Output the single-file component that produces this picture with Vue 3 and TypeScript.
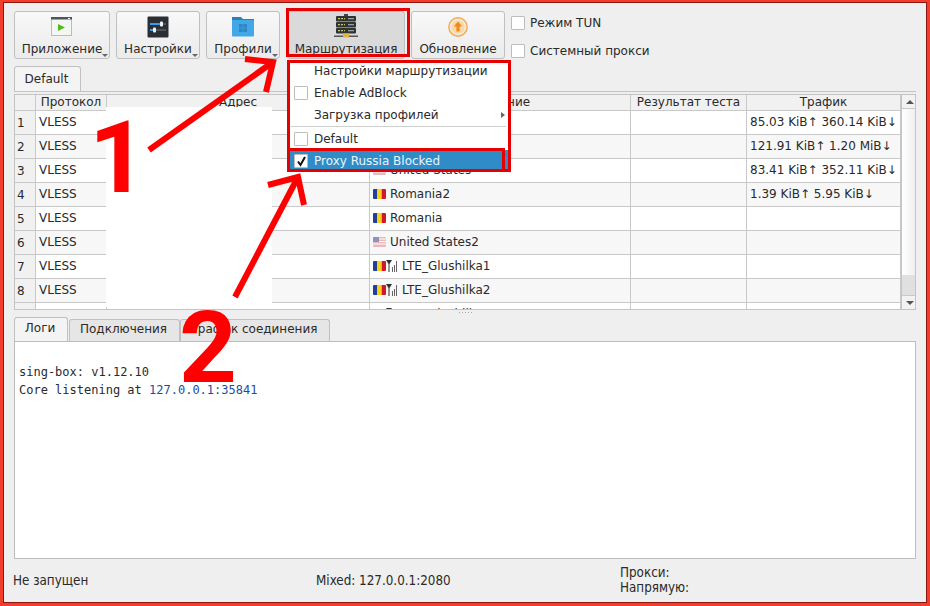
<script setup lang="ts">
interface Row {
  n: number
  flag: '' | 'ro' | 'us'
  signal: boolean
  name: string
  traffic: string
}
const rows: Row[] = [
  { n: 1, flag: '', signal: false, name: '', traffic: '85.03 KiB↑ 360.14 KiB↓' },
  { n: 2, flag: '', signal: false, name: '', traffic: '121.91 KiB↑ 1.20 MiB↓' },
  { n: 3, flag: 'us', signal: false, name: 'United States', traffic: '83.41 KiB↑ 352.11 KiB↓' },
  { n: 4, flag: 'ro', signal: false, name: 'Romania2', traffic: '1.39 KiB↑ 5.95 KiB↓' },
  { n: 5, flag: 'ro', signal: false, name: 'Romania', traffic: '' },
  { n: 6, flag: 'us', signal: false, name: 'United States2', traffic: '' },
  { n: 7, flag: 'ro', signal: true, name: 'LTE_Glushilka1', traffic: '' },
  { n: 8, flag: 'ro', signal: true, name: 'LTE_Glushilka2', traffic: '' },
  { n: 9, flag: 'ro', signal: true, name: 'LTE_Glushilka3', traffic: '' },
]
</script>

<template>
  <div class="window">
    <div class="toolbar">
      <button class="tool w1">
        <svg width="22" height="22" viewBox="0 0 22 22">
          <rect x="0.5" y="1.500" width="20" height="18" fill="#f4f6f2" stroke="#b9bdb9" />
          <rect x="0" y="1" width="21" height="2.500" fill="#4d5560" />
          <rect x="17" y="2" width="2" height="1" fill="#fff" />
          <path d="M7 8l7 3.500-7 3.500z" fill="#54b91f" />
        </svg>
        <span class="label">Приложение</span><i class="drop"></i>
      </button>
      <button class="tool w2">
        <svg width="22" height="22" viewBox="0 0 22 22">
          <rect x="0.5" y="0.500" width="21" height="21" rx="1" fill="#2b2f33" />
          <rect x="3" y="7" width="16" height="2" fill="#4c5257" />
          <rect x="3" y="7" width="11" height="2" fill="#3d9be8" />
          <rect x="13" y="5.500" width="3" height="5" rx="1" fill="#eef1f3" />
          <rect x="3" y="13" width="16" height="2" fill="#4c5257" />
          <rect x="3" y="13" width="4" height="2" fill="#3d9be8" />
          <rect x="6" y="11.500" width="3" height="5" rx="1" fill="#eef1f3" />
        </svg>
        <span class="label">Настройки</span><i class="drop"></i>
      </button>
      <button class="tool w3">
        <svg width="22" height="22" viewBox="0 0 22 22">
          <path d="M0 1h9l2 2h11v3H0z" fill="#2a81bb" />
          <rect x="0" y="4" width="22" height="16.500" rx="1" fill="#41a7e6" />
          <rect x="7" y="8" width="8" height="8" fill="#2f86c3" />
          <path d="M11 8v8M7 12h8" stroke="#41a7e6" stroke-width="0.7" />
        </svg>
        <span class="label">Профили</span><i class="drop"></i>
      </button>
      <button class="tool w4 active">
        <svg width="24" height="24" viewBox="0 0 24 24">
          <rect x="10" y="0" width="4" height="3" fill="#444" />
          <rect x="2" y="2" width="20" height="5.500" rx="1" fill="#2f3333" />
          <rect x="2" y="8" width="20" height="5.500" rx="1" fill="#2f3333" />
          <rect x="2" y="14" width="20" height="5.500" rx="1" fill="#2f3333" />
          <path d="M4 4.700h7M4 10.700h7M4 16.700h7" stroke="#c2c96a" stroke-width="1.300" stroke-dasharray="2 1" />
          <path d="M14 4.700h6M14 10.700h6M14 16.700h6" stroke="#9aa0a0" stroke-width="1.300" />
          <rect x="0" y="21.500" width="24" height="1.500" fill="#555" />
          <rect x="9" y="19.500" width="6" height="4" fill="#e3b53c" />
        </svg>
        <span class="label">Маршрутизация</span><i class="drop"></i>
      </button>
      <button class="tool w5">
        <svg width="20" height="20" viewBox="0 0 20 20">
          <circle cx="10" cy="10" r="9.200" fill="#f3e8d8" stroke="#f0aa55" stroke-width="1.400" />
          <circle cx="10" cy="10" r="6.600" fill="#f9d9a8" />
          <path d="M10 4.500l4.200 5h-2.600v5H8.400v-5H5.800z" fill="#f08a1d" />
        </svg>
        <span class="label">Обновление</span>
      </button>
      <div class="toggles">
        <label class="check-row"><span class="box"></span>Режим TUN</label>
        <label class="check-row"><span class="box"></span>Системный прокси</label>
      </div>
    </div>

    <div class="tabs top-tabs">
      <div class="tab current">Default</div>
    </div>
    <div class="pane-line"></div>

    <div class="table">
      <div class="table-main">
        <div class="row head">
          <div class="cell"></div>
          <div class="cell">Протокол</div>
          <div class="cell">Адрес</div>
          <div class="cell">Название</div>
          <div class="cell">Результат теста</div>
          <div class="cell">Трафик</div>
        </div>
        <div v-for="r in rows" :key="r.n" class="row" :class="{ alt: r.n % 2 === 0 }">
          <div class="cell num">{{ r.n }}</div>
          <div class="cell">VLESS</div>
          <div class="cell"></div>
          <div class="cell name">
            <svg v-if="r.flag === 'ro'" class="flag" width="13" height="10" viewBox="0 0 13 10">
              <rect width="4.300" height="10" fill="#1f3f9c" />
              <rect x="4.300" width="4.400" height="10" fill="#fbd116" />
              <rect x="8.700" width="4.300" height="10" fill="#d3182c" />
            </svg>
            <svg v-if="r.flag === 'us'" class="flag" width="13" height="10" viewBox="0 0 13 10">
              <rect width="13" height="10" fill="#e9b9bd" />
              <path d="M0 2h13M0 4.500h13M0 7h13" stroke="#fff" stroke-width="1.200" />
              <rect width="6" height="5" fill="#8c93bf" />
            </svg>
            <svg v-if="r.signal" class="signal" width="12" height="14" viewBox="0 0 12 14">
              <path d="M0 1h6L3.500 5v8h-1V5z" fill="#333" />
              <path d="M6.500 8v5M8.500 6v7M10.500 2v11" stroke="#666" stroke-width="1" />
            </svg>
            <span>{{ r.name }}</span>
          </div>
          <div class="cell"></div>
          <div class="cell">{{ r.traffic }}</div>
        </div>
      </div>
      <div class="scrollbar">
        <div class="sb-btn"><i class="up"></i></div>
        <div class="sb-track"><div class="sb-thumb"></div></div>
        <div class="sb-btn"><i class="down"></i></div>
      </div>
    </div>

    <div class="splitter"><i></i><i></i><i></i><i></i><i></i></div>

    <div class="tabs bottom-tabs">
      <div class="tab current">Логи</div>
      <div class="tab">Подключения</div>
      <div class="tab">График соединения</div>
    </div>
    <div class="log">
      <div>&nbsp;</div>
      <div>sing-box: v1.12.10</div>
      <div>Core listening at <span class="addr">127.0.0.1:35841</span></div>
    </div>

    <div class="status">
      <div class="s1">Не запущен</div>
      <div class="s2">Mixed: 127.0.0.1:2080</div>
      <div class="s3"><div>Прокси:</div><div>Напрямую:</div></div>
    </div>

    <div class="redact"></div>

    <div class="menu">
      <div class="item"><span class="slot"></span>Настройки маршрутизации</div>
      <div class="item"><span class="slot"><span class="box"></span></span>Enable AdBlock</div>
      <div class="item"><span class="slot"></span>Загрузка профилей<i class="sub"></i></div>
      <div class="sep"></div>
      <div class="item"><span class="slot"><span class="box"></span></span>Default</div>
      <div class="item selected">
        <span class="slot">
          <span class="box">
            <svg width="11" height="11" viewBox="0 0 11 11"><path d="M2 5.500l2.500 3.500L9 1" fill="none" stroke="#111" stroke-width="2" /></svg>
          </span>
        </span>Proxy Russia Blocked
      </div>
    </div>

    <div class="mark mark-btn"></div>
    <div class="mark mark-menu"></div>
    <div class="mark mark-sel"></div>

    <svg class="arrows" width="930" height="606" viewBox="0 0 930 606">
      <g fill="none" stroke="#fe0000" stroke-width="6">
        <path d="M149 150L273 62" />
        <path d="M245 59L273 62L266 92" />
        <path d="M235 297L298 177" />
        <path d="M268 185L298 177L304 205" />
      </g>
    </svg>
    <div class="big one">1</div>
    <div class="big two">2</div>
  </div>
</template>

<style scoped>
.window {
  position: relative;
  box-sizing: border-box;
  width: 930px;
  height: 606px;
  overflow: hidden;
  background: #efefef;
  border: 3px solid #f23c2c;
  border-top-width: 2px;
  box-shadow: inset 0 0 0 1px #8f1510;
  padding: 9px 11px 0;
  display: flex;
  flex-direction: column;
  font-family: "DejaVu Sans", sans-serif;
  font-size: 12px;
  color: #2a2a2a;
}
.toolbar {
  display: flex;
  gap: 6px;
  height: 48px;
  flex: none;
}
.tool {
  position: relative;
  box-sizing: border-box;
  height: 48px;
  padding: 4px 0 0;
  margin: 0;
  border: 1px solid #c0c0c0;
  border-radius: 3px;
  background: linear-gradient(#f8f8f8, #ebebeb);
  display: flex;
  flex-direction: column;
  align-items: center;
  font: inherit;
  color: inherit;
}
.tool svg { flex: none; height: 22px; }
.w1 { width: 96px; }
.w2 { width: 84px; }
.w3 { width: 74px; margin-right: 1px; }
.w4 { width: 118px; }
.w5 { width: 94px; }
.active { background: #dadada; }
.w4 svg { height: 24px; margin-top: -2px; }
.label {
  position: absolute;
  top: 29px;
  left: 0;
  right: 0;
  text-align: center;
  line-height: 16px;
  white-space: nowrap;
}
.drop {
  position: absolute;
  right: 1px;
  bottom: 1px;
  width: 0;
  height: 0;
  border-left: 3px solid transparent;
  border-right: 3px solid transparent;
  border-top: 3px solid #666;
}
.toggles {
  display: flex;
  flex-direction: column;
  gap: 14px;
  padding-top: 5px;
}
.check-row {
  display: flex;
  align-items: center;
  gap: 5px;
  height: 14px;
  white-space: nowrap;
}
.box {
  box-sizing: border-box;
  flex: none;
  width: 14px;
  height: 14px;
  background: #fff;
  border: 1px solid #bdbdbd;
  border-radius: 1px;
  display: flex;
  align-items: center;
  justify-content: center;
}
.tabs {
  display: flex;
  align-items: flex-end;
  flex: none;
}
.top-tabs { height: 25px; margin-top: 7px; }
.bottom-tabs { height: 24px; }
.tab {
  box-sizing: border-box;
  height: 22px;
  padding: 0 2px 0 0;
  line-height: 19px;
  border: 1px solid #c0c0c0;
  border-bottom: 0;
  border-radius: 3px 3px 0 0;
  background: #e6e6e6;
  white-space: nowrap;
  text-align: center;
}
.tab.current {
  background: #f4f4f4;
  margin-right: 1px;
  height: 24px;
  line-height: 21px;
}
.top-tabs .tab.current { height: 25px; width: 67px; line-height: 24px; }
.bottom-tabs .tab.current { width: 54px; }
.bottom-tabs .tab:nth-child(2) { width: 111px; }
.bottom-tabs .tab:nth-child(3) { width: 150px; }
.pane-line {
  flex: none;
  height: 2px;
  border-top: 1px solid #c4c4c4;
}
.table {
  flex: none;
  box-sizing: border-box;
  height: 216px;
  border: 1px solid #c4c4c4;
  display: flex;
  overflow: hidden;
}
.table-main {
  flex: none;
  width: 886px;
  overflow: hidden;
}
.row {
  display: grid;
  grid-template-columns: 21px 71px 263px 261px 116px 154px;
  height: 24px;
  background: #fff;
}
.row.alt { background: #f7f7f7; }
.cell {
  box-sizing: border-box;
  padding-left: 3px;
  line-height: 22px;
  border-right: 1px solid #c9c9c9;
  border-bottom: 1px solid #c9c9c9;
  white-space: nowrap;
  overflow: hidden;
}
.head {
  height: 16px;
  background: #f1f1f1;
}
.head .cell {
  text-align: center;
  line-height: 15px;
  padding: 0;
}
.num {
  background: #f1f1f1;
  padding-left: 2px;
  line-height: 24px;
}
.name {
  display: flex;
  align-items: center;
  padding-left: 3px;
  padding-bottom: 1px;
}
.flag { flex: none; margin-right: 4px; border-radius: 1px; }
.signal { flex: none; margin-left: -4px; margin-right: 4px; }
.scrollbar {
  flex: none;
  width: 15px;
  display: flex;
  flex-direction: column;
  background: linear-gradient(90deg, #fff, #ededed);
  border-left: 1px solid #c4c4c4;
}
.sb-btn {
  flex: none;
  height: 13px;
  background: #f2f2f2;
  display: flex;
  align-items: center;
  justify-content: center;
  border-bottom: 1px solid #c8c8c8;
}
.sb-btn:last-child { border-bottom: 0; border-top: 1px solid #c8c8c8; }
.up, .down {
  width: 0;
  height: 0;
  border-left: 4px solid transparent;
  border-right: 4px solid transparent;
}
.up { border-bottom: 4px solid #555; }
.down { border-top: 4px solid #555; }
.sb-track {
  flex: 1;
  display: flex;
  flex-direction: column;
  justify-content: flex-end;
}
.sb-thumb { height: 20px; background: #e0e0e0; }
.splitter {
  flex: none;
  height: 7px;
  display: flex;
  justify-content: center;
  gap: 2px;
  padding-top: 2px;
  box-sizing: border-box;
}
.splitter i { width: 1px; height: 1px; background: #aaa; }
.log {
  flex: none;
  box-sizing: border-box;
  height: 218px;
  background: #fff;
  border: 1px solid #bdbdbd;
  padding: 3px 4px;
  font-family: "DejaVu Sans Mono", monospace;
  font-size: 12px;
  line-height: 18px;
}
.addr { color: #1c4ea0; }
.status {
  flex: none;
  height: 38px;
  display: grid;
  grid-template-columns: 303px 304px 1fr;
  align-items: center;
  font-stretch: condensed;
  font-size: 13.3px;
  line-height: 15px;
  padding-top: 2px;
  margin-left: -1px;
}
.redact {
  position: absolute;
  left: 103px;
  top: 105px;
  width: 166px;
  height: 200px;
  background: #fff;
}
.menu {
  position: absolute;
  left: 284px;
  top: 58px;
  width: 223px;
  height: 112px;
  background: #fff;
  box-sizing: border-box;
}
.item {
  position: relative;
  display: flex;
  align-items: center;
  height: 22px;
  white-space: nowrap;
}
.slot {
  flex: none;
  width: 27px;
  padding-left: 7px;
  box-sizing: border-box;
}
.sep {
  height: 1px;
  margin: 0 4px 1px;
  background: #cfcfcf;
}
.sub {
  position: absolute;
  right: 5px;
  top: 8px;
  width: 0;
  height: 0;
  border-top: 3px solid transparent;
  border-bottom: 3px solid transparent;
  border-left: 4px solid #666;
}
.selected {
  background: #308cc6;
  color: #eaf4fb;
}
.mark {
  position: absolute;
  box-sizing: border-box;
  border: 3px solid #e60000;
  pointer-events: none;
}
.mark-btn { left: 283px; top: 6px; width: 124px; height: 49px; }
.mark-menu { left: 284px; top: 58px; width: 224px; height: 112px; }
.mark-sel { left: 284px; top: 146px; width: 218px; height: 24px; }
.arrows {
  position: absolute;
  left: -3px;
  top: -2px;
  pointer-events: none;
}
.big {
  position: absolute;
  font-family: Roboto, sans-serif;
  font-weight: 700;
  font-size: 101px;
  line-height: 100px;
  color: #fe0000;
}
.one { left: 86px; top: 106px; }
.two { left: 176px; top: 296px; }
</style>

<style>
html, body { margin: 0; padding: 0; }
</style>
